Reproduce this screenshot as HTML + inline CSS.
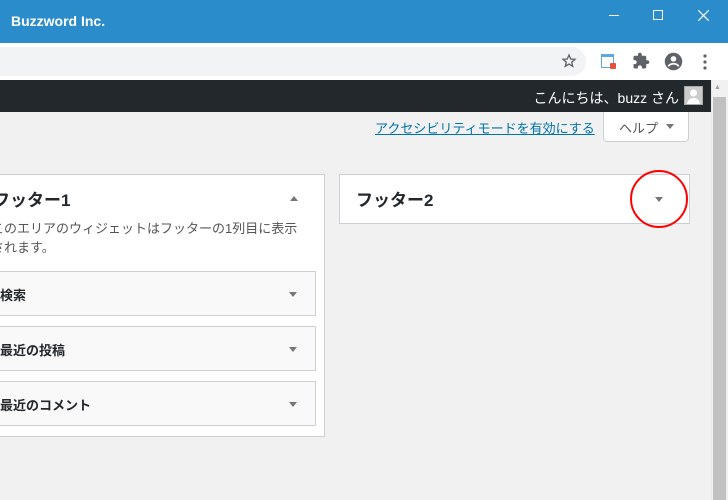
<!DOCTYPE html>
<html><head><meta charset="utf-8"><style>
*{margin:0;padding:0;box-sizing:border-box}
body{width:728px;height:500px;overflow:hidden;background:#f1f1f1;font-family:"Liberation Sans","Noto Sans CJK JP",sans-serif;position:relative}
.abs{position:absolute}
.title{left:0;top:0;width:728px;height:43px;background:#2b8ccb;color:#fff;font-size:14px;font-weight:bold}
.tool{left:0;top:43px;width:728px;height:37px;background:#fff}
.omni{left:-20px;top:47px;width:606px;height:29px;background:#f1f3f4;border-radius:15px}
.admin{left:0;top:80px;width:711px;height:32px;background:#23282d;color:#fff;font-size:14px}
.sb{left:711px;top:80px;width:17px;height:420px;background:#f1f1f1;border-left:1px solid #e8e8e8}
.thumb{left:713px;top:97px;width:13px;height:403px;background:#c1c1c1}
.box{background:#fff;border:1px solid #ccd0d4}
.arrow{width:0;height:0;border-left:4px solid transparent;border-right:4px solid transparent;border-top:5px solid #72777c}
.up{width:0;height:0;border-left:4px solid transparent;border-right:4px solid transparent;border-bottom:5px solid #72777c}
.w{left:-10px;width:326px;height:45px;background:#f9f9f9;border:1px solid #ccd0d4;font-size:13px;font-weight:bold;color:#23282d}
.w span{position:absolute;left:9px;top:13px}
.w .arrow{position:absolute;left:298px;top:20px}
</style></head><body>
<div class="abs title"><span class="abs" style="left:11px;top:13px">Buzzword Inc.</span>
<div class="abs" style="left:609px;top:15px;width:10px;height:1px;background:#fff"></div>
<div class="abs" style="left:653px;top:10px;width:10px;height:10px;border:1px solid #fff"></div>
<svg class="abs" style="left:698px;top:10px" width="11" height="11"><path d="M0 0L11 11M11 0L0 11" stroke="#fff" stroke-width="1.2"/></svg></div>
<div class="abs tool"></div>
<div class="abs omni"></div>
<svg class="abs" style="left:561px;top:53px" width="16" height="16" viewBox="0 0 24 24"><path d="M12 3l2.6 6 6.4.5-4.9 4.2 1.5 6.3L12 16.6 6.4 20l1.5-6.3L3 9.5l6.4-.5z" fill="none" stroke="#5f6368" stroke-width="2"/></svg>
<div class="abs" style="left:601px;top:54px;width:13px;height:14px;border:1px solid #5aa9e6;border-top:3px solid #5aa9e6"></div>
<div class="abs" style="left:610px;top:63px;width:6px;height:6px;background:#e8503a;border-radius:1px"></div>
<svg class="abs" style="left:632px;top:52px" width="18" height="18" viewBox="0 0 24 24"><path d="M20.5 11H19V7a2 2 0 0 0-2-2h-4V3.5a2.5 2.5 0 0 0-5 0V5H4a2 2 0 0 0-2 2v3.8h1.5a2.7 2.7 0 0 1 0 5.4H2V20a2 2 0 0 0 2 2h3.8v-1.5a2.7 2.7 0 0 1 5.4 0V22H17a2 2 0 0 0 2-2v-4h1.5a2.5 2.5 0 0 0 0-5z" fill="#5f6368"/></svg>
<svg class="abs" style="left:663px;top:51px" width="21" height="21" viewBox="0 0 24 24"><circle cx="12" cy="12" r="10" fill="#5f6368"/><circle cx="12" cy="9" r="3.2" fill="#fff"/><path d="M6 17.5c1.5-2.3 3.7-3 6-3s4.5.7 6 3" stroke="#fff" stroke-width="2" fill="none"/></svg>
<svg class="abs" style="left:702px;top:53px" width="6" height="18"><circle cx="3" cy="3" r="1.6" fill="#5f6368"/><circle cx="3" cy="9" r="1.6" fill="#5f6368"/><circle cx="3" cy="15" r="1.6" fill="#5f6368"/></svg>
<div class="abs admin"><span class="abs" style="right:32px;top:8px;white-space:nowrap">こんにちは、buzz さん</span>
<div class="abs" style="left:684px;top:6px;width:19px;height:19px;background:#ccc;border:1px solid #aaa"><svg width="17" height="17"><circle cx="8.5" cy="6" r="3.5" fill="#fff"/><path d="M2 17c1-5 4-6 6.5-6s5.5 1 6.5 6z" fill="#fff"/></svg></div></div>
<div class="abs sb"></div><div class="abs thumb"></div>
<span class="abs" style="left:714px;top:84px;font-size:7px;color:#a0a0a0">▲</span>
<span class="abs" style="left:375px;top:118px;font-size:13px;color:#0073aa;text-decoration:underline">アクセシビリティモードを有効にする</span>
<div class="abs" style="left:603px;top:112px;width:86px;height:30px;background:#fff;border:1px solid #ccd0d4;border-top:none;border-radius:0 0 4px 4px;font-size:13px;color:#555"><span class="abs" style="left:15px;top:6px">ヘルプ</span><div class="abs arrow" style="left:62px;top:12px;border-top-color:#72777c"></div></div>
<div class="abs box" style="left:-10px;top:174px;width:335px;height:263px"></div>
<span class="abs" style="left:-7px;top:186px;font-size:17px;font-weight:bold;color:#23282d">フッター1</span>
<div class="abs up" style="left:290px;top:196px"></div>
<span class="abs" style="left:-9px;top:219px;font-size:13px;color:#555;line-height:19px">このエリアのウィジェットはフッターの1列目に表示<br>されます。</span>
<div class="abs w" style="top:271px"><span>検索</span><div class="arrow"></div></div>
<div class="abs w" style="top:326px"><span>最近の投稿</span><div class="arrow"></div></div>
<div class="abs w" style="top:381px"><span>最近のコメント</span><div class="arrow"></div></div>
<div class="abs box" style="left:339px;top:174px;width:351px;height:50px"></div>
<span class="abs" style="left:356px;top:186px;font-size:17px;font-weight:bold;color:#23282d">フッター2</span>
<div class="abs arrow" style="left:655px;top:197px"></div>
<div class="abs" style="left:630px;top:170px;width:58px;height:58px;border:2px solid #f00;border-radius:50%"></div>
</body></html>
